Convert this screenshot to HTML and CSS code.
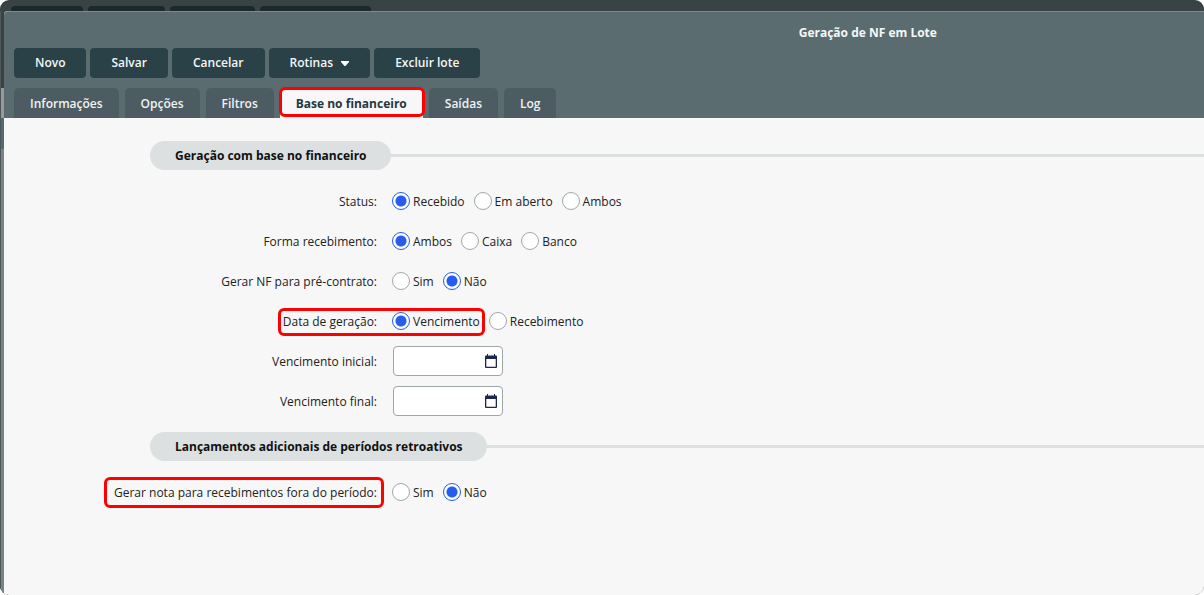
FILE: index.html
```html
<!DOCTYPE html>
<html lang="pt-BR">
<head>
<meta charset="utf-8">
<title>Geração de NF em Lote</title>
<link rel="stylesheet" href="styles.css">
</head>
<body>
<div class="backdrop">
  <div class="back-tabs" aria-hidden="true"><i class="w-1"></i><i class="w-2"></i><i class="w-3"></i><i class="w-4"></i></div>
  <div class="back-edge" aria-hidden="true"></div>
  <main class="window">
    <header class="head">
      <h1 class="title">Geração de NF em Lote</h1>
      <div class="toolbar">
        <button type="button" class="btn">Novo</button>
        <button type="button" class="btn">Salvar</button>
        <button type="button" class="btn">Cancelar</button>
        <button type="button" class="btn">Rotinas <svg class="caret" viewBox="0 0 8 5" aria-hidden="true"><path d="M0 0h8v1L4.500 5h-1L0 1z"/></svg></button>
        <button type="button" class="btn">Excluir lote</button>
      </div>
      <div class="tabs" role="tablist">
        <button type="button" role="tab" class="tab">Informações</button>
        <button type="button" role="tab" class="tab">Opções</button>
        <button type="button" role="tab" class="tab">Filtros</button>
        <button type="button" role="tab" class="tab active" aria-selected="true">Base no financeiro<span class="mark mark-tab"></span></button>
        <button type="button" role="tab" class="tab">Saídas</button>
        <button type="button" role="tab" class="tab">Log</button>
      </div>
    </header>
    <form class="form">
      <div class="section"><h2 class="pill">Geração com base no financeiro</h2></div>
      <div class="row" role="radiogroup" aria-labelledby="l1">
        <span class="label" id="l1">Status:</span>
        <div class="options">
          <label class="option"><input type="radio" class="radio" name="status" checked>Recebido</label>
          <label class="option"><input type="radio" class="radio" name="status">Em aberto</label>
          <label class="option"><input type="radio" class="radio" name="status">Ambos</label>
        </div>
      </div>
      <div class="row" role="radiogroup" aria-labelledby="l2">
        <span class="label" id="l2">Forma recebimento:</span>
        <div class="options">
          <label class="option"><input type="radio" class="radio" name="forma" checked>Ambos</label>
          <label class="option"><input type="radio" class="radio" name="forma">Caixa</label>
          <label class="option"><input type="radio" class="radio" name="forma">Banco</label>
        </div>
      </div>
      <div class="row" role="radiogroup" aria-labelledby="l3">
        <span class="label" id="l3">Gerar NF para pré-contrato:</span>
        <div class="options">
          <label class="option"><input type="radio" class="radio" name="pre">Sim</label>
          <label class="option"><input type="radio" class="radio" name="pre" checked>Não</label>
        </div>
      </div>
      <div class="row" role="radiogroup" aria-labelledby="l4">
        <span class="label" id="l4">Data de geração:</span>
        <div class="options">
          <label class="option"><input type="radio" class="radio" name="data" checked>Vencimento<span class="mark mark-data"></span></label>
          <label class="option"><input type="radio" class="radio" name="data">Recebimento</label>
        </div>
      </div>
      <div class="row">
        <label class="label" for="ini">Vencimento inicial:</label>
        <div class="date">
          <input type="text" class="date-input" id="ini">
          <button type="button" class="date-btn" aria-label="Abrir calendário"><svg class="cal" viewBox="0 0 12 14" aria-hidden="true"><path d="M2 0h1v1.500h6V0h1v1.500h1a1 1 0 0 1 1 1V13a1 1 0 0 1-1 1H1a1 1 0 0 1-1-1V2.500a1 1 0 0 1 1-1h1zM1.300 5v7.700h9.400V5z"/></svg></button>
        </div>
      </div>
      <div class="row">
        <label class="label" for="fim">Vencimento final:</label>
        <div class="date">
          <input type="text" class="date-input" id="fim">
          <button type="button" class="date-btn" aria-label="Abrir calendário"><svg class="cal" viewBox="0 0 12 14" aria-hidden="true"><path d="M2 0h1v1.500h6V0h1v1.500h1a1 1 0 0 1 1 1V13a1 1 0 0 1-1 1H1a1 1 0 0 1-1-1V2.500a1 1 0 0 1 1-1h1zM1.300 5v7.700h9.400V5z"/></svg></button>
        </div>
      </div>
      <div class="section"><h2 class="pill">Lançamentos adicionais de períodos retroativos</h2></div>
      <div class="row" role="radiogroup" aria-labelledby="l7">
        <span class="label" id="l7">Gerar nota para recebimentos fora do período:<span class="mark mark-nota"></span></span>
        <div class="options">
          <label class="option"><input type="radio" class="radio" name="nota">Sim</label>
          <label class="option"><input type="radio" class="radio" name="nota" checked>Não</label>
        </div>
      </div>
    </form>
  </main>
</div>
</body>
</html>
```
FILE: styles.css
```css
* { box-sizing: border-box; }
body {
  margin: 0;
  background: #fff;
  color: #222;
  font: 12px/18px "Open Sans", "Noto Sans", sans-serif;
}
button, input { font: inherit; }

.backdrop {
  display: grid;
  grid-template: 11px 1fr / 4px 1fr;
  min-height: 100vh;
  overflow: hidden;
  border-radius: 9px;
  background: #394244;
}
.back-tabs {
  grid-column: 1 / -1;
  display: flex;
  gap: 5px;
  padding: 6px 0 0 11px;
}
.back-tabs i { background: #1b292b; border-radius: 4px 4px 0 0; }
.w-1 { width: 72px; }
.w-2 { width: 77px; }
.w-3 { width: 85px; }
.w-4 { width: 111px; }
.back-edge {
  border-left: 1px solid #4f5859;
  background: linear-gradient(#394244 77px, #999 77px 107px, #4c6c78 107px 138px, #788488 138px);
}

.window {
  display: flex;
  flex-direction: column;
  border-radius: 4px 0 0 0;
  background: #f7f7f7;
}
.head {
  padding: 12px 10px 0;
  border-top: 1px solid #7c8b8f;
  border-radius: 4px 0 0 0;
  background: #5b6c70;
}
.title {
  margin: 0;
  padding-left: 66.5%;
  color: #f5f7f7;
  font-size: 12px;
  line-height: 18px;
  font-weight: 700;
}
.toolbar { display: flex; gap: 4px; margin-top: 6px; }
.btn {
  height: 30px;
  padding: 0 21px;
  border: 0;
  border-radius: 4px;
  background: #2b4148;
  color: #f5f7f7;
  font-weight: 600;
}
.caret { width: 8px; height: 5px; margin-left: 5px; fill: #fff; vertical-align: 1px; }

.tabs { display: flex; gap: 6px; margin-top: 10px; }
.tab {
  position: relative;
  height: 30px;
  padding: 2px 16px 0;
  border: 0;
  border-radius: 5px 5px 0 0;
  background: #4d5c62;
  color: #f0f3f3;
  font-weight: 600;
}
.tab.active { background: #f7f7f7; color: #26383f; font-weight: 700; }

.mark {
  position: absolute;
  border: 3px solid #f00;
  border-radius: 6px;
  pointer-events: none;
}
.mark-tab { inset: -1px -2px 1px -1px; }
.mark-data { inset: -5px -5px -5px -114px; }
.mark-nota { inset: -7px -7px -6px -10px; }

.form { padding-top: 12px; }
.section {
  display: flex;
  align-items: center;
  margin: 11px 0 11px 146px;
}
.section::after { content: ""; flex: 1; height: 3px; background: #dce0e0; }
.pill {
  margin: 0;
  padding: 6px 24px 5px 25px;
  border-radius: 15px;
  background: #dce0e0;
  color: #111;
  font-size: 12px;
  line-height: 18px;
  font-weight: 700;
}
.row {
  display: grid;
  grid-template-columns: 373px 1fr;
  column-gap: 15px;
  align-items: center;
  height: 40px;
  padding-top: 2px;
}
.label { position: relative; justify-self: end; white-space: nowrap; }
.options { display: flex; gap: 9px; }
.option { position: relative; display: flex; align-items: center; gap: 3px; }
.radio {
  appearance: none;
  width: 18px;
  height: 18px;
  margin: -2px 0 0;
  border: 1px solid #a0a8aa;
  border-radius: 50%;
  background: #fff;
}
.radio:checked {
  border-color: #245df0;
  background: radial-gradient(circle, #245df0 5px, #fff 6px);
}
.date { position: relative; width: 110px; margin: -2px 0 0 1px; }
.date-input {
  display: block;
  width: 100%;
  height: 30px;
  padding: 0 26px 0 6px;
  border: 1px solid #9ea7aa;
  border-radius: 4px;
  background: #fff;
}
.date-btn {
  position: absolute;
  top: 8px;
  right: 6px;
  display: flex;
  padding: 0;
  border: 0;
  background: none;
}
.cal { width: 12px; height: 14px; fill: #1c2750; }
```
